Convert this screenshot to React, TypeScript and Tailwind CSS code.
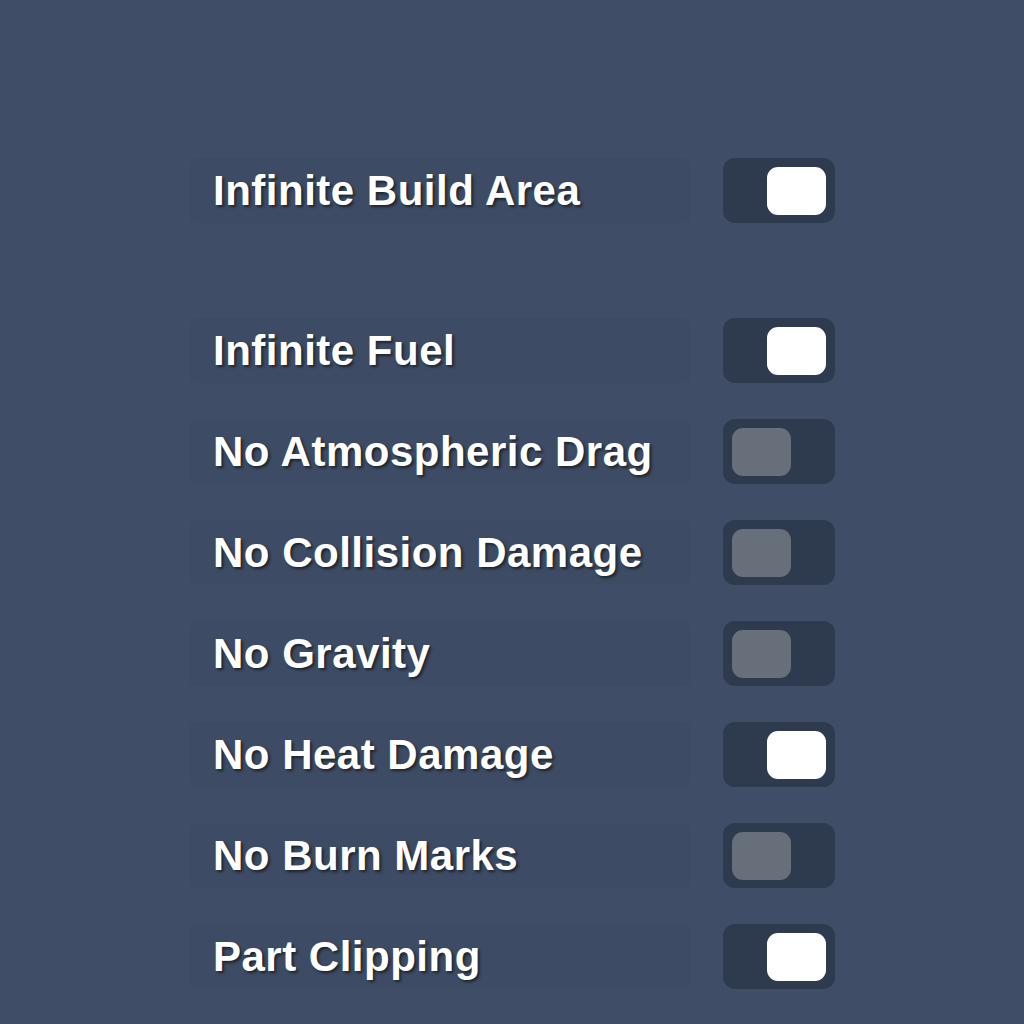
import React, { useState } from 'react';

type Setting = {
    key: string;
    label: string;
    enabled: boolean;
};

const initialSettings: Setting[] = [
    { key: 'infiniteBuildArea', label: 'Infinite Build Area', enabled: true },
    { key: 'infiniteFuel', label: 'Infinite Fuel', enabled: true },
    { key: 'noDrag', label: 'No Atmospheric Drag', enabled: false },
    { key: 'noCollision', label: 'No Collision Damage', enabled: false },
    { key: 'noGravity', label: 'No Gravity', enabled: false },
    { key: 'noHeat', label: 'No Heat Damage', enabled: true },
    { key: 'noBurnMarks', label: 'No Burn Marks', enabled: false },
    { key: 'partClipping', label: 'Part Clipping', enabled: true },
];

const Toggle: React.FC<{ on: boolean; onChange: () => void }> = ({ on, onChange }) => (
    <button
        onClick={onChange}
        className={`flex h-[65px] w-[112px] shrink-0 items-center rounded-[12px] bg-[#2e3a4d] px-[9px] ${on ? 'justify-end' : 'justify-start'}`}
    >
        <span
            className={`block h-[48px] w-[59px] rounded-[11px] ${on ? 'bg-white' : 'bg-[#676f7b]'}`}
        />
    </button>
);

const SettingRow: React.FC<{ setting: Setting; onToggle: () => void }> = ({ setting, onToggle }) => (
    <div className="flex items-center gap-[33px]">
        <div className="flex h-[65px] flex-1 items-center rounded-[4px] bg-black/[0.02] pl-[23px]">
            <span className="text-[42px] font-bold leading-none tracking-[0.5px] text-white [text-shadow:2px_2px_3px_rgba(0,0,0,0.55)]">
                {setting.label}
            </span>
        </div>
        <Toggle on={setting.enabled} onChange={onToggle} />
    </div>
);

const App: React.FC = () => {
    const [settings, setSettings] = useState(initialSettings);

    const toggle = (key: string) => {
        setSettings(s => s.map(item => (item.key === key ? { ...item, enabled: !item.enabled } : item)));
    };

    const [first, ...rest] = settings;

    return (
        <div className="min-h-[1024px] w-full bg-[#3f4e66] font-['Liberation_Sans',Arial,sans-serif]">
            <div className="ml-[190px] w-[645px] pt-[158px]">
                <SettingRow setting={first} onToggle={() => toggle(first.key)} />
                <div className="mt-[95px] flex flex-col gap-[36px]">
                    {rest.map(s => (
                        <SettingRow key={s.key} setting={s} onToggle={() => toggle(s.key)} />
                    ))}
                </div>
            </div>
        </div>
    );
};

export default App;
